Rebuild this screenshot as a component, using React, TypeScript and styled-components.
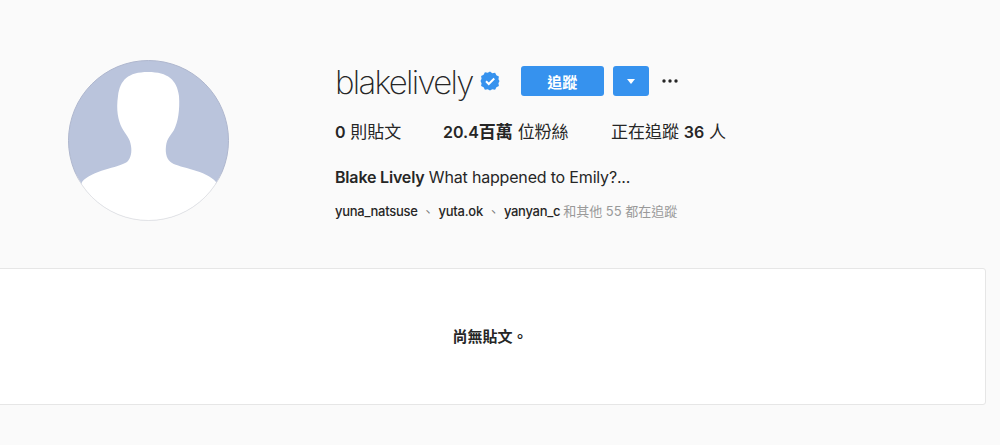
import React from "react";
import styled, { createGlobalStyle } from "styled-components";

const Global = createGlobalStyle`
  html, body { margin: 0; padding: 0; background: #fafafa; }
  body { font-family: "Inter", "Liberation Sans", "Noto Sans CJK TC", sans-serif; color: #262626; overflow: hidden; }
`;
const Page = styled.div`
  width: 1000px; height: 445px; overflow: hidden; background: #fafafa;
  display: flex; flex-direction: column;
`;
const Header = styled.header`
  display: flex; height: 268px; padding: 60px 0 0 68px; box-sizing: border-box;
`;
const AvatarBox = styled.div`
  width: 161px; height: 161px; margin-right: 106px; flex: none;
`;
const Info = styled.section`
  display: flex; flex-direction: column; align-items: flex-start;
`;
const TitleRow = styled.div`
  display: flex; align-items: center; height: 42px;
`;
const Username = styled.h1`
  margin: 2px 0 0; font-size: 33px; font-weight: 200; letter-spacing: -1.72px; line-height: 42px; color: #262626;
`;
const Badge = styled.svg`
  width: 20px; height: 20px; margin-left: 7px; margin-top: -1px; flex: none;
`;
const FollowButton = styled.button`
  width: 83px; height: 30px; margin-left: 21px; border: 0; border-radius: 3px; padding: 0;
  background: #3692ee; color: #fff; font: 700 15px "Noto Sans CJK TC", sans-serif;
`;
const CaretButton = styled.button`
  width: 36px; height: 30px; margin-left: 9px; border: 0; border-radius: 3px; padding: 0;
  background: #3692ee; display: flex; align-items: center; justify-content: center;
  &::before { content: ""; border-left: 4px solid transparent; border-right: 4px solid transparent; border-top: 5px solid #fff; }
`;
const More = styled.svg`
  width: 16px; height: 4px; margin-left: 13px; flex: none;
`;
const Stats = styled.ul`
  list-style: none; margin: 18px 0 0; padding: 0; display: flex; font-size: 17px; line-height: 24px;
`;
const Stat = styled.li<{ $w: number }>`
  width: ${(p) => p.$w}px; white-space: nowrap;
`;
const Strong = styled.b`
  font-weight: 600;
`;
const Num = styled.b`
  font-weight: 600; font-size: 16px;
`;
const Bio = styled.div`
  margin-top: 21px; font-size: 16px; line-height: 24px; letter-spacing: -0.18px; white-space: nowrap;
`;
const Followed = styled.div`
  margin-top: 13px; font-size: 13px; line-height: 18px; color: #999; white-space: nowrap;
`;
const FollowerName = styled.span`
  color: #262626; font-weight: 500; letter-spacing: -0.28px;
`;
const Sep = styled.span`
  color: #777; margin: 0 4px;
`;
const Rest = styled.span`
  margin-left: 3px;
`;
const EmptyPanel = styled.main`
  width: 991px; height: 137px; margin-left: -5px; box-sizing: border-box; background: #fff;
  border: 1px solid #e6e6e6; border-radius: 3px; display: flex; align-items: center; justify-content: center;
`;
const EmptyText = styled.p`
  margin: 0 0 2px -1px; font-size: 15px; font-weight: 600; color: #262626;
`;

export default function App() {
  return (
    <Page>
      <Global />
      <Header>
        <AvatarBox>
          <svg width="161" height="161" viewBox="0 0 161 161">
            <defs>
              <clipPath id="c"><circle cx="80.5" cy="80.5" r="80" /></clipPath>
              <linearGradient id="ring" x1="0" y1="0" x2="0" y2="1">
                <stop offset="0.7" stopColor="#aeb6cd" />
                <stop offset="0.78" stopColor="#e2e3e6" />
              </linearGradient>
            </defs>
            <circle cx="80.5" cy="80.5" r="80" fill="#fff" />
            <g clipPath="url(#c)">
              <rect width="161" height="161" fill="#bac4dc" />
              <path fill="#fff" d="M80 12 C60 12 52 20 50 36 C48 50 50 60 54 68 C58 75 62 78 63 86 C64 92 63 98 59 102 C50 108 24 110 14 122 L0 161 L161 161 L148 122 C138 110 112 108 104 103 C99 100 97 94 98 86 C99 78 103 75 106 70 C110 62 112 50 111 36 C109 20 100 12 80 12 Z" />
            </g>
            <circle cx="80.5" cy="80.5" r="80" fill="none" stroke="url(#ring)" strokeWidth="1" />
          </svg>
        </AvatarBox>
        <Info>
          <TitleRow>
            <Username>blakelively</Username>
            <Badge viewBox="0 0 40 40">
              <path fill="#3692ee" d="M20 1l4.6 3.4 5.6-.9 2.6 5 5 2.6-.9 5.6L39 20l-2.1 4.3.9 5.6-5 2.6-2.6 5-5.6-.9L20 39l-4.6-2.4-5.6.9-2.6-5-5-2.6.9-5.6L1 20l2.1-4.3-.9-5.6 5-2.6 2.6-5 5.6.9z" />
              <path fill="none" stroke="#fff" strokeWidth="4" d="M12 20.5l5.5 5.5L28.5 15" />
            </Badge>
            <FollowButton>追蹤</FollowButton>
            <CaretButton aria-label="more" />
            <More viewBox="0 0 16 4">
              <circle cx="2" cy="2" r="1.7" fill="#262626" />
              <circle cx="8" cy="2" r="1.7" fill="#262626" />
              <circle cx="14" cy="2" r="1.7" fill="#262626" />
            </More>
          </TitleRow>
          <Stats>
            <Stat $w={108}><Num>0</Num> 則貼文</Stat>
            <Stat $w={168}><Num>20.4</Num><Strong>百萬</Strong> 位粉絲</Stat>
            <Stat $w={120}>正在追蹤 <Num>36</Num> 人</Stat>
          </Stats>
          <Bio><Strong>Blake Lively</Strong> What happened to Emily?...</Bio>
          <Followed>
            <FollowerName>yuna_natsuse</FollowerName><Sep>、</Sep>
            <FollowerName>yuta.ok</FollowerName><Sep>、</Sep>
            <FollowerName>yanyan_c</FollowerName><Rest>和其他 55 都在追蹤</Rest>
          </Followed>
        </Info>
      </Header>
      <EmptyPanel>
        <EmptyText>尚無貼文。</EmptyText>
      </EmptyPanel>
    </Page>
  );
}
